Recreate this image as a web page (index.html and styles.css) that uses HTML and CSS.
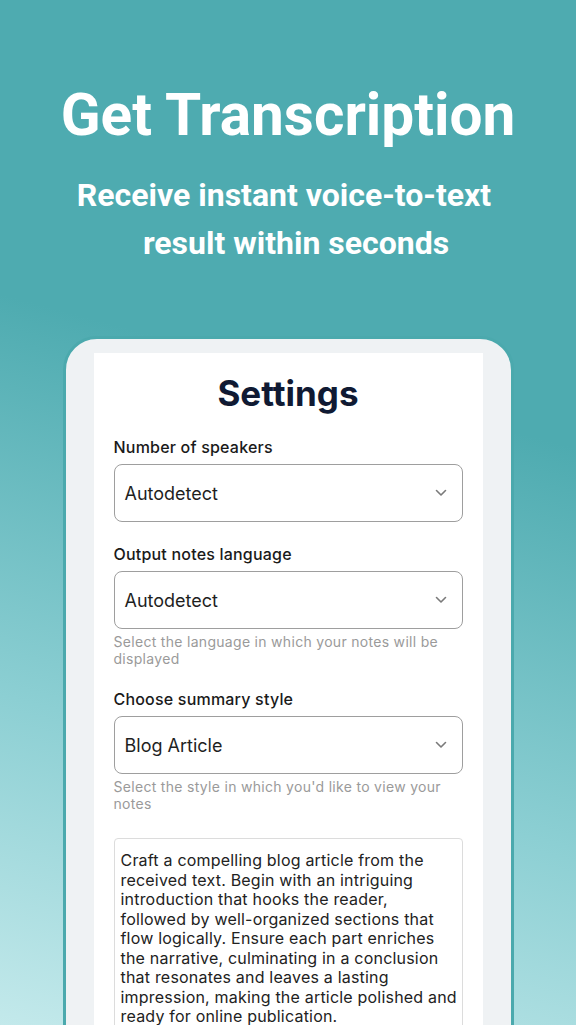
FILE: index.html
```html
<!DOCTYPE html>
<html>
<head>
<meta charset="utf-8">
<link rel="stylesheet" href="styles.css">
</head>
<body>
<div class="page">
  <header class="hero">
    <h1 class="hero-title">Get Transcription</h1>
    <p class="hero-sub"><span class="line1">Receive instant voice-to-text</span><span class="line2">result within seconds</span></p>
  </header>
  <div class="device">
    <div class="screen">
      <h2 class="settings-title">Settings</h2>

      <div class="field">
        <div class="label">Number of speakers</div>
        <div class="select"><span>Autodetect</span>
          <svg class="chev" width="12" height="8" viewBox="0 0 12 8"><path d="M1.5 1.5 L6 6 L10.5 1.5" fill="none" stroke="#7a7a7a" stroke-width="1.6" stroke-linecap="round" stroke-linejoin="round"/></svg>
        </div>
      </div>

      <div class="field">
        <div class="label">Output notes language</div>
        <div class="select"><span>Autodetect</span>
          <svg class="chev" width="12" height="8" viewBox="0 0 12 8"><path d="M1.5 1.5 L6 6 L10.5 1.5" fill="none" stroke="#7a7a7a" stroke-width="1.6" stroke-linecap="round" stroke-linejoin="round"/></svg>
        </div>
        <div class="help">Select the language in which your notes will be displayed</div>
      </div>

      <div class="field">
        <div class="label">Choose summary style</div>
        <div class="select"><span>Blog Article</span>
          <svg class="chev" width="12" height="8" viewBox="0 0 12 8"><path d="M1.5 1.5 L6 6 L10.5 1.5" fill="none" stroke="#7a7a7a" stroke-width="1.6" stroke-linecap="round" stroke-linejoin="round"/></svg>
        </div>
        <div class="help">Select the style in which you'd like to view your notes</div>
      </div>

      <div class="textarea">Craft a compelling blog article from the received text. Begin with an intriguing introduction that hooks the reader, followed by well-organized sections that flow logically. Ensure each part enriches the narrative, culminating in a conclusion that resonates and leaves a lasting impression, making the article polished and ready for online publication.</div>
    </div>
  </div>
</div>
</body>
</html>
```

FILE: styles.css
```css
html, body {
  margin: 0;
  padding: 0;
}
body {
  width: 576px;
  height: 1025px;
  overflow: hidden;
  background: linear-gradient(195deg, #4eabb0 0%, #4eabb0 38%, #8ccfd3 72%, #c3e9eb 100%);
  font-family: Inter, "Noto Sans", sans-serif;
}
.page {
  display: flex;
  flex-direction: column;
  align-items: center;
}
.hero {
  padding-top: 79px;
  text-align: center;
  color: #fff;
  font-family: Roboto, "Liberation Sans", sans-serif;
}
.hero-title {
  margin: 0;
  font-size: 58.5px;
  line-height: 72px;
  font-weight: 700;
}
.hero-sub {
  margin: 20px 0 0;
  font-size: 32px;
  line-height: 48px;
  font-weight: 700;
}
.hero-sub span {
  display: block;
}
.line1 { padding-right: 8px; }
.line2 { padding-left: 16px; }

.device {
  margin-top: 69px;
  width: 389px;
  height: 800px;
  padding: 14px 28px 0;
  background: #eff2f4;
  border: 3px solid #4ba9ad;
  border-radius: 34px;
}
.screen {
  background: #fff;
  height: 100%;
  padding: 18px 20px 0;
  box-sizing: border-box;
}
.settings-title {
  margin: 0;
  text-align: center;
  font-size: 35px;
  line-height: 44px;
  font-weight: 700;
  color: #101a33;
}
.field {
  margin-top: 22px;
}
.label {
  font-size: 16px;
  line-height: 20px;
  font-weight: 500;
  letter-spacing: 0.2px;
  color: #1a1a1a;
  margin-bottom: 7px;
}
.select {
  height: 58px;
  box-sizing: border-box;
  border: 1px solid #9e9e9e;
  border-radius: 8px;
  display: flex;
  align-items: center;
  justify-content: space-between;
  padding: 0 15px 0 10px;
  font-size: 18px;
  color: #1f1f1f;
}
.help {
  margin-top: 4px;
  font-size: 14px;
  line-height: 17px;
  letter-spacing: 0.3px;
  color: #9a9a9a;
}
.textarea {
  margin-top: 26px;
  border: 1px solid #dcdcdc;
  border-radius: 4px;
  padding: 12px 4px 10px 6px;
  font-size: 16px;
  line-height: 19.5px;
  letter-spacing: 0.2px;
  color: #222;
}
```
